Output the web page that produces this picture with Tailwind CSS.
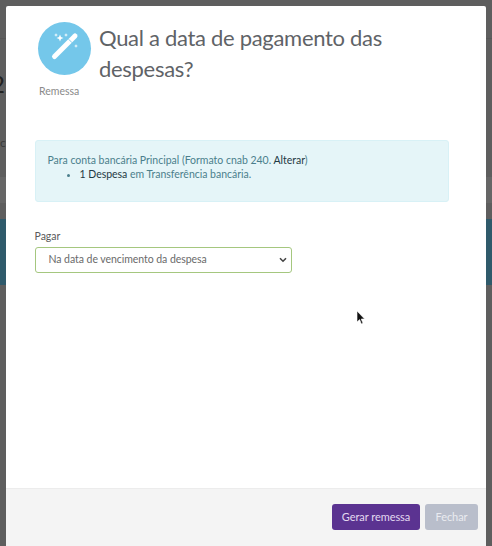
<!DOCTYPE html>
<html lang="pt">
<head>
<meta charset="utf-8">
<script src="https://cdn.jsdelivr.net/npm/@tailwindcss/browser@4"></script>
</head>
<body class="m-0">
<div class="relative w-[492px] h-[546px] overflow-hidden bg-[#5e5e5e] font-['Lato','Liberation_Sans',sans-serif]">
  <div class="absolute left-0 top-[38px] w-full h-px bg-[#575757]"></div>
  <div class="absolute left-0 top-[177px] w-full h-[26px] bg-[#666666]"></div>
  <div class="absolute left-0 top-[219px] w-full h-[66px] bg-[#2f5a6b]"></div>
  <div class="absolute left-[-9px] top-[70px] text-[24px] leading-[28px] text-[#222222]">2</div>
  <div class="absolute left-[0px] top-[136px] text-[12px] leading-[14px] text-[#3a3a3a]">c</div>

  <div class="absolute left-[6px] top-[6px] w-[480px] h-[540px] bg-white flex flex-col rounded-t-[2px]">
    <div class="flex-1 pl-[28.5px] pr-[29px] pt-[16px]">
      <div class="flex">
        <div class="w-[64.5px] shrink-0">
          <div class="ml-[3.5px] w-[53px] h-[53px] rounded-full bg-[#74c7ea]">
            <svg width="53" height="53" viewBox="0 0 53 53" fill="none">
              <path d="M16.5 34.5 L37 14" stroke="#ffffff" stroke-width="5" stroke-linecap="round"/>
              <path d="M30.6 17.2 L34.2 20.8" stroke="#74c7ea" stroke-width="0.9"/>
              <path d="M22 12.5 L23 15 L25.5 16 L23 17 L22 19.5 L21 17 L18.5 16 L21 15 Z" fill="#ffffff"/>
              <path d="M18 11 L18.5 12.5 L20 13 L18.5 13.5 L18 15 L17.5 13.5 L16 13 L17.5 12.5 Z" fill="#ffffff"/>
              <path d="M28 11 L28.5 12.5 L30 13 L28.5 13.5 L28 15 L27.5 13.5 L26 13 L27.5 12.5 Z" fill="#ffffff"/>
              <path d="M38 22 L38.5 23.5 L40 24 L38.5 24.5 L38 26 L37.5 24.5 L36 24 L37.5 23.5 Z" fill="#ffffff"/>
            </svg>
          </div>
          <div class="ml-[4.5px] mt-[9px] text-[10.5px] leading-[14px] text-[#8a8a8a]">Remessa</div>
        </div>
        <h1 class="m-0 text-[22px] leading-[31px] tracking-[-0.3px] font-normal text-[#5f6367]">Qual a data de pagamento das despesas?</h1>
      </div>
      <div class="mt-[42px] w-[414.5px] h-[62px] rounded-[3px] border border-[#d8f1f6] bg-[#e5f5f8] pl-[12px] pt-[12px] text-[10.5px] tracking-[-0.02px] leading-[14px] text-[#4b7f8c]">
        <div>Para conta bancária Principal (Formato cnab 240. <span class="text-[#1f3a44]">Alterar</span>)</div>
        <ul class="list-disc pl-[32px] m-0">
          <li><span class="text-[#1f3a44]">1 Despesa</span> em Transferência bancária.</li>
        </ul>
      </div>
      <label class="block mt-[27px] text-[10.5px] leading-[14px] text-[#5a5a5a]">Pagar</label>
      <div class="relative mt-[4px] w-[257.5px] h-[26px] rounded-[3px] border border-[#a5c77f] bg-white flex items-center pl-[13px] text-[10.5px] tracking-[-0.05px] text-[#6a6a6a]">
        Na data de vencimento da despesa
        <svg class="absolute right-[4px] top-[9px]" width="8" height="6" viewBox="0 0 8 6" fill="none"><path d="M1 1.2 L4 4.2 L7 1.2" stroke="#444444" stroke-width="1.6"/></svg>
      </div>
    </div>
    <div class="h-[58px] bg-[#f4f4f4] border-t border-[#ececec] flex justify-end items-start gap-[5px] pt-[15px] pr-[8px]">
      <button class="w-[88px] h-[26px] rounded-[3px] bg-[#5b3391] text-[11px] tracking-[-0.05px] text-[#e3d9f0]">Gerar remessa</button>
      <button class="w-[53px] h-[26px] rounded-[3px] bg-[#b9becb] text-[11px] tracking-[-0.05px] text-[#e9ebf0]">Fechar</button>
    </div>
  </div>

  <svg class="absolute left-[356px] top-[310px]" width="10" height="16" viewBox="0 0 10 16"><path d="M1 1 L1 12 L3.6 9.6 L5.4 14 L7 13.3 L5.2 9 L8.6 9 Z" fill="#111111" stroke="#ffffff" stroke-width="0.6"/></svg>
</div>
</body>
</html>
